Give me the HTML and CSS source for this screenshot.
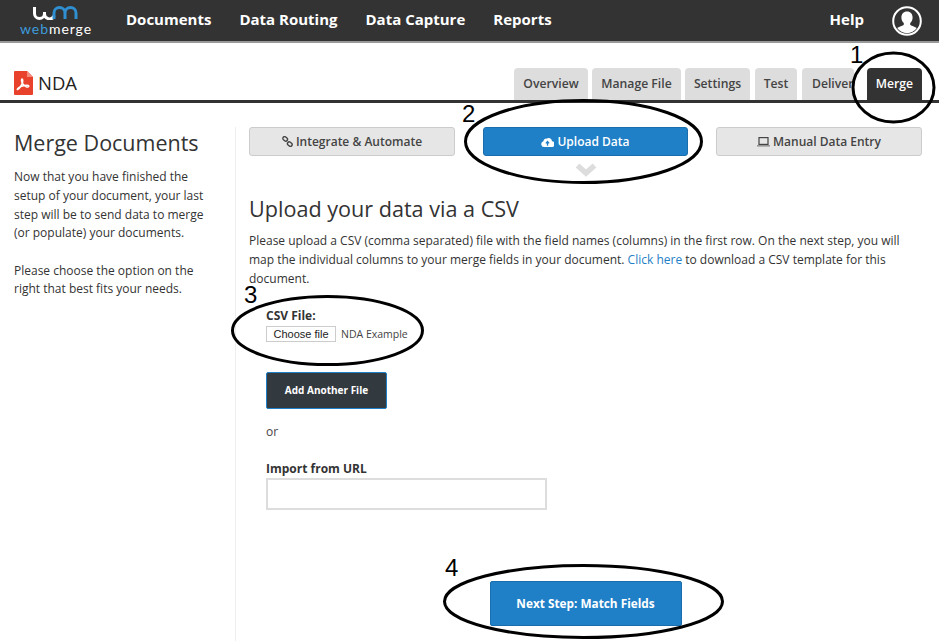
FILE: index.html
```html
<!DOCTYPE html>
<html lang="en">
<head>
<meta charset="utf-8">
<title>WebMerge - NDA</title>
<link rel="stylesheet" href="styles.css">
</head>
<body>
<div class="page">
  <header class="topbar">
    <a class="logo">
      <svg class="logo-mark" width="48" height="14" viewBox="0 0 48 14"><path d="M2.500 1v6.500a5 5 0 0 0 10 0v-1.500 1.500a5 5 0 0 0 9.500 2.500" fill="none" stroke="#fff" stroke-width="3"/><path d="M22 13V7a5.500 5.500 0 0 1 11 0v6M33 7a5.500 5.500 0 0 1 11 0v6" fill="none" stroke="#2f8fd0" stroke-width="3"/></svg>
      <span class="logo-text"><span class="logo-web">web</span>merge</span>
    </a>
    <nav class="mainnav">
      <a>Documents</a><a>Data Routing</a><a>Data Capture</a><a>Reports</a>
    </nav>
    <div class="usernav">
      <a class="help">Help</a>
      <svg width="30" height="30" viewBox="0 0 30 30"><circle cx="15" cy="15" r="13.800" fill="#333" stroke="#fff" stroke-width="2"/><path d="M15 5.500c3.600 0 5.600 2.600 5.600 6 0 2.400-1 4.400-2.400 5.500v1.600c0 1 4.400 2 6.600 3.400a11.800 11.800 0 0 1-19.600 0c2.200-1.400 6.600-2.400 6.600-3.400V17c-1.400-1.100-2.400-3.100-2.400-5.500 0-3.400 2-6 5.600-6z" fill="#fff"/></svg>
    </div>
  </header>

  <div class="docbar">
    <div class="doctitle">
      <svg width="19" height="24" viewBox="0 0 19 24"><path d="M1 0h12l6 6v17a1 1 0 0 1-1 1H1a1 1 0 0 1-1-1V1a1 1 0 0 1 1-1z" fill="#e8412c"/><path d="M13 0l6 6h-6z" fill="#f58b7c"/><path d="M3.500 18.500c2-1 3.800-3.600 4.800-6.300.6-1.700.6-4.200-.2-4.200s-.8 2.400.2 4.200c1.200 2 3 3.600 4.200 3.800 1.500.2 2.500-.3 2.300-1s-2.200-.8-4.200-.5c-2.800.4-5.400 1.500-6.600 2.800-.8.800-.8 1.500-.5 1z" fill="none" stroke="#fff" stroke-width="1.500" stroke-linejoin="round"/></svg>
      <span class="docname">NDA</span>
    </div>
    <nav class="tabs">
      <a class="tab tab-overview">Overview</a>
      <a class="tab tab-manage">Manage File</a>
      <a class="tab tab-settings">Settings</a>
      <a class="tab tab-test">Test</a>
      <a class="tab tab-deliver">Delivery</a>
      <a class="tab tab-merge">Merge</a>
    </nav>
  </div>

  <div class="content">
    <aside class="sidebar">
      <h2>Merge Documents</h2>
      <p>Now that you have finished the setup of your document, your last step will be to send data to merge (or populate) your documents.</p>
      <p>Please choose the option on the right that best fits your needs.</p>
    </aside>
    <main class="main">
      <div class="modes">
        <a class="mode">
          <svg width="11" height="11" viewBox="0 0 12 12"><g fill="none" stroke="#444" stroke-width="1.500"><rect x="0.800" y="1.200" width="5.500" height="3.800" rx="1.900" transform="rotate(40 3.500 3)"/><rect x="5.700" y="7" width="5.500" height="3.800" rx="1.900" transform="rotate(40 8.500 9)"/></g></svg>
          Integrate &amp; Automate
        </a>
        <div class="mode-slot">
          <a class="mode mode-active">
            <svg width="13" height="10" viewBox="0 0 14 11"><path d="M3.300 11A3.200 3.200 0 0 1 2.500 4.700 3 3 0 0 1 6 1.800 3.800 3.800 0 0 1 12 4.600 3.200 3.200 0 0 1 11 11z" fill="#fff"/><path d="M7 9.500V5.500M5.200 7L7 5l1.800 2" fill="none" stroke="#1f7fc7" stroke-width="1.400"/></svg>
            Upload Data
          </a>
          <svg class="chevron" width="22" height="14" viewBox="0 0 22 14"><path d="M2.500 2.500L11 10 19.500 2.500" fill="none" stroke="#ddd" stroke-width="5.500"/></svg>
        </div>
        <a class="mode">
          <svg width="13" height="10" viewBox="0 0 13 10"><rect x="2" y="0.600" width="9" height="6.800" fill="none" stroke="#444" stroke-width="1.200"/><path d="M0 8.500h13v.8H0z" fill="#444"/></svg>
          Manual Data Entry
        </a>
      </div>

      <h1>Upload your data via a CSV</h1>
      <p class="intro">Please upload a CSV (comma separated) file with the field names (columns) in the first row. On the next step, you will map the individual columns to your merge fields in your document. <a class="link">Click here</a> to download a CSV template for this document.</p>

      <form class="form">
        <label class="label label-file">CSV File:</label>
        <div class="filerow">
          <span class="filebtn">Choose file</span>
          <span class="filename">NDA Example</span>
        </div>
        <a class="addfile">Add Another File</a>
        <p class="or">or</p>
        <label class="label label-url">Import from URL</label>
        <div class="urlinput"></div>
      </form>

      <div class="actions">
        <a class="next">Next Step: Match Fields</a>
      </div>
    </main>
  </div>

  <svg class="annotations" width="939" height="641" viewBox="0 0 939 641">
    <g fill="none" stroke="#000" stroke-width="3">
      <ellipse cx="893.500" cy="87.500" rx="40.500" ry="34.500"/>
      <ellipse cx="583.500" cy="141.500" rx="118" ry="41"/>
      <ellipse cx="327.500" cy="330.500" rx="95" ry="34"/>
      <ellipse cx="583.500" cy="601.500" rx="139" ry="36"/>
    </g>
  </svg>
  <span class="num num-1">1</span>
  <span class="num num-2">2</span>
  <span class="num num-3">3</span>
  <span class="num num-4">4</span>
</div>
</body>
</html>
```
FILE: styles.css
```css
* { box-sizing: border-box; }
html, body { margin: 0; padding: 0; background: #fff; }
body { font-family: "Open Sans", "Liberation Sans", sans-serif; color: #333; }
a { text-decoration: none; }
.page { position: relative; width: 939px; height: 641px; overflow: hidden; }

.topbar { display: flex; align-items: center; height: 43px; background: #333; border-bottom: 2px solid #999; color: #fff; }
.logo { display: flex; flex-direction: column; align-items: center; gap: 2px; width: 72px; margin-left: 20px; }
.logo-mark { display: block; }
.logo-text { font-family: Lato, sans-serif; font-weight: 400; font-size: 14px; line-height: 14px; letter-spacing: 0.950px; color: #fff; }
.logo-web { color: #3d9bdc; }
.mainnav { display: flex; gap: 28px; margin-left: 34px; margin-bottom: 3px; }
.mainnav a, .usernav a { font-size: 15px; font-weight: 700; color: #fff; }
.help { margin-bottom: 3px; }
.usernav { display: flex; align-items: center; gap: 28px; margin-left: auto; margin-right: 17px; }

.docbar { display: flex; justify-content: space-between; align-items: flex-end; height: 60px; border-bottom: 3px solid #333; padding: 0 17px 0 14px; }
.doctitle { display: flex; align-items: center; gap: 5px; font-size: 18.500px; color: #222; height: 24px; margin-bottom: 5px; }
.docname { margin-bottom: 2px; }
.tabs { display: flex; height: 32px; }
.tab { display: block; height: 32px; background: #ddd; border-radius: 4px 4px 0 0; font-size: 12.200px; font-weight: 600; line-height: 32px; text-align: center; color: #444; white-space: nowrap; overflow: hidden; }
.tab-overview { width: 74px; margin-right: 4px; }
.tab-manage { width: 89px; margin-right: 4px; }
.tab-settings { width: 65px; margin-right: 5px; }
.tab-test { width: 42px; margin-right: 5px; }
.tab-deliver { width: 52px; margin-right: 13px; padding-left: 10px; text-align: left; }
.tab-merge { width: 55px; background: #333; color: #fff; }

.content { display: flex; height: 538px; padding-top: 24px; }
.sidebar { width: 236px; border-right: 1px solid #eee; padding: 0 14px; }
.sidebar h2 { margin: 0 0 9px; font-size: 21.500px; font-weight: 400; line-height: 32px; color: #333; }
.sidebar p { margin: 0 0 18.400px; font-size: 12px; line-height: 18.800px; color: #333; }

.main { flex: 1; padding: 0 17px 0 13px; }
.modes { display: flex; justify-content: space-between; align-items: flex-start; }
.mode { display: flex; justify-content: center; align-items: center; gap: 3px; width: 206px; height: 29px; background: #e6e6e6; border: 1px solid #ccc; border-radius: 3px; font-size: 12px; font-weight: 600; color: #444; }
.mode-slot { display: flex; flex-direction: column; align-items: center; }
.mode-active { width: 205px; background: #1f7fc7; border-color: #1a6eae; color: #fff; }
.chevron { margin-top: 7px; }
.main h1 { margin: 15px 0 0; font-size: 21.600px; font-weight: 400; line-height: 34px; color: #333; }
.intro { margin: 5px 0 0; font-size: 12px; line-height: 19px; color: #333; }
.link { color: #1f7fc7; }

.form { display: flex; flex-direction: column; align-items: flex-start; padding-left: 17px; margin-top: 19px; }
.label { font-size: 12px; font-weight: 700; line-height: 18px; color: #333; }
.filerow { display: flex; align-items: center; gap: 5px; margin-top: 1px; }
.filebtn { display: block; width: 70px; height: 16px; background: #fff; border: 1px solid #ccc; font-family: "Liberation Sans", sans-serif; font-size: 11px; line-height: 14px; text-align: center; color: #222; }
.filename { font-size: 10.500px; color: #444; }
.addfile { display: block; width: 121px; height: 37px; margin-top: 30px; background: #333a3f; border: 1px solid #1f7fc7; border-radius: 2px; font-size: 10px; font-weight: 700; line-height: 35px; text-align: center; color: #fff; }
.or { margin: 14px 0 0; font-size: 12px; line-height: 18px; color: #444; }
.label-url { margin-top: 19px; }
.urlinput { width: 281px; height: 32px; border: 2px solid #ddd; background: #fff; }

.actions { display: flex; justify-content: center; margin-top: 71px; }
.next { display: block; width: 192px; height: 45px; background: #1f7fc7; border: 1px solid #1a6eae; border-radius: 2px; font-size: 11.800px; font-weight: 700; line-height: 43px; text-align: center; color: #fff; }

.annotations { position: absolute; left: 0; top: 0; pointer-events: none; }
.num { position: absolute; font-family: "Liberation Sans", sans-serif; font-size: 24px; line-height: 24px; color: #000; }
.num-1 { left: 850px; top: 43px; }
.num-2 { left: 462px; top: 102px; }
.num-3 { left: 244px; top: 283px; }
.num-4 { left: 445px; top: 556px; }
```
